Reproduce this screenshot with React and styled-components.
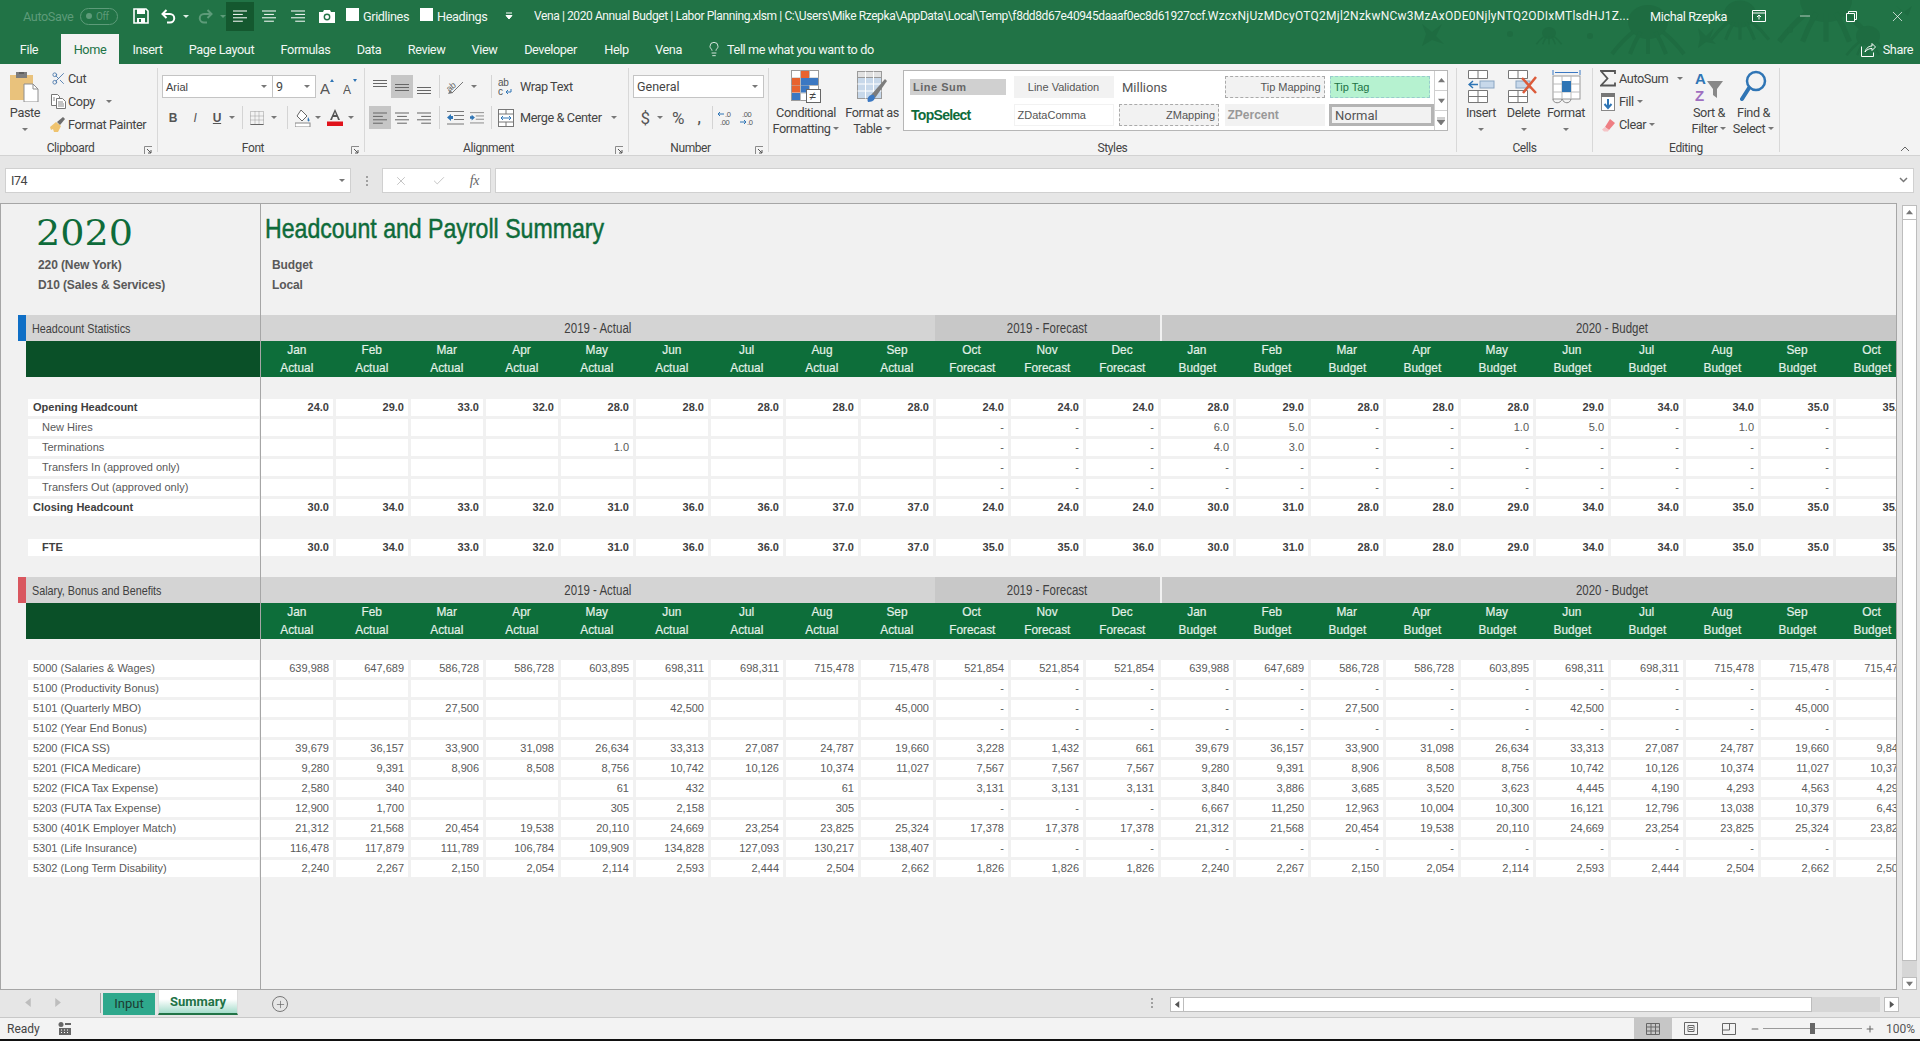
import React from "react";
import styled, { createGlobalStyle } from "styled-components";
import { Scissors, Lightbulb, Check, X, Minus, Plus } from "lucide-react";

const UI_FONT = `"Roboto", "Liberation Sans", sans-serif`;
const CELL_FONT = `"Liberation Sans", Arial, sans-serif`;

const GlobalStyle = createGlobalStyle`
  html, body { margin: 0; padding: 0; overflow: hidden; background: #f1f1f1; }
  * { box-sizing: border-box; }
`;

const Page = styled.div`
  width: 1920px;
  height: 1041px;
  display: flex;
  flex-direction: column;
  overflow: hidden;
  font-family: ${UI_FONT};
  font-size: 13px;
  letter-spacing: -0.4px;
  color: #444;
`;

/* the sheet headings use a condensed face, squeezed from Liberation Sans */
const Squeezed = styled.span`
  display: inline-block;
  white-space: nowrap;
  transform: scaleX(${(p) => p.$x || 0.82});
  transform-origin: ${(p) => p.$origin || "center"};
`;

/* ---------- title bar ---------- */

const Header = styled.header`
  position: relative;
  background: #217346;
  color: #fff;
  overflow: hidden;
`;

const Pattern = styled.svg`
  position: absolute;
  right: 0;
  top: 0;
`;

const TitleBar = styled.div`
  position: relative;
  display: flex;
  align-items: center;
  height: 34px;
  padding-bottom: 2px;
`;

const AutoSave = styled.span`
  margin-left: 23px;
  width: 57px;
  font-size: 12.7px;
  color: #5d9b79;
`;

const Toggle = styled.span`
  display: flex;
  align-items: center;
  gap: 4px;
  width: 38px;
  height: 17px;
  padding-left: 5px;
  border: 1px solid #5d9b79;
  border-radius: 9px;
  font-size: 10px;
  color: #5d9b79;
  &::before {
    content: "";
    width: 6px;
    height: 6px;
    border-radius: 50%;
    background: #5d9b79;
  }
`;

const QatButton = styled.span`
  display: flex;
  align-items: center;
  justify-content: center;
  flex: none;
  width: ${(p) => p.$w}px;
  height: 29px;
  margin-left: ${(p) => p.$ml || 0}px;
  background: ${(p) => (p.$active ? "#14582f" : "transparent")};
`;

const CheckItem = styled.span`
  display: flex;
  align-items: center;
  flex: none;
  width: ${(p) => p.$w}px;
  margin-left: ${(p) => p.$ml}px;
  font-size: 12.7px;
  color: #f0f6f2;
  &::before {
    content: "";
    flex: none;
    width: 13px;
    height: 13px;
    margin: -3px 4px 0 0;
    background: #fff;
  }
`;

const WindowTitle = styled.span`
  flex: none;
  margin-left: 6px;
  width: 1098px;
  white-space: nowrap;
  overflow: hidden;
  font-size: 12px;
  color: #f4f8f5;
`;

const TitleTail = styled.span`
  letter-spacing: 0.25px;
`;

const RightBlock = styled.div`
  display: flex;
  align-items: center;
  flex: none;
  margin-left: auto;
`;

const UserName = styled.span`
  margin-right: 9px;
  font-size: 12.7px;
  white-space: nowrap;
  color: #f4f8f5;
`;

const WinButton = styled.span`
  display: flex;
  align-items: center;
  justify-content: center;
  width: 46px;
  height: 30px;
`;

/* ---------- ribbon tabs ---------- */

const TabRow = styled.nav`
  position: relative;
  display: flex;
  height: 30px;
`;

const RibbonTab = styled.span`
  display: flex;
  align-items: center;
  justify-content: center;
  width: ${(p) => p.$w}px;
  margin-right: ${(p) => p.$mr || 0}px;
  font-size: 12.7px;
  background: ${(p) => (p.$active ? "#f3f3f3" : "transparent")};
  color: ${(p) => (p.$active ? "#217346" : "#f2f7f4")};
`;

const TellMe = styled.span`
  display: flex;
  align-items: center;
  gap: 5px;
  margin-left: 11px;
  font-size: 12.7px;
  color: #f2f7f4;
`;

const Share = styled.span`
  display: flex;
  align-items: center;
  gap: 7px;
  margin: 0 7px 0 auto;
  font-size: 12.7px;
  color: #f2f7f4;
`;

/* ---------- ribbon ---------- */

const Ribbon = styled.section`
  display: flex;
  flex: none;
  height: 92px;
  padding-top: 4px;
  background: #f3f3f3;
  border-bottom: 1px solid #d2d2d2;
`;

const Group = styled.div`
  display: flex;
  flex-direction: column;
  flex: none;
  width: ${(p) => p.$w}px;
  height: 84px;
  border-right: 1px solid #d8d8d8;
`;

const GroupBody = styled.div`
  display: flex;
  height: 72px;
  padding-left: ${(p) => p.$pl || 0}px;
`;

const GroupFoot = styled.div`
  display: grid;
  grid-template-columns: 1fr auto 1fr;
  align-items: center;
  height: 12px;
  padding-right: ${(p) => (p.$launcher ? 16 : 0)}px;
  font-size: 12px;
  line-height: 16px;
  color: #444;
  & > span { grid-column: 2; }
  & > svg { grid-column: 3; justify-self: end; margin: 4px -12px 0 0; }
`;

const Collapse = styled.span`
  display: block;
  margin: 78px 10px 0 auto;
  line-height: 0;
`;

const Launcher = () => (
  <svg width="9" height="9" viewBox="0 0 9 9">
    <path d="M.5 8V.5H8" fill="none" stroke="#8a8a8a" />
    <path d="M3 3l4 4M7 4v3H4" fill="none" stroke="#555" />
  </svg>
);

const BigButton = styled.div`
  display: flex;
  flex-direction: column;
  align-items: center;
  width: ${(p) => p.$w}px;
  flex: none;
  font-size: 12.7px;
  line-height: 16px;
  color: #444;
  white-space: nowrap;
`;

const BigIcon = styled.div`
  display: flex;
  align-items: center;
  justify-content: center;
  height: 37px;
`;

const Caret = styled.span`
  display: inline-block;
  flex: none;
  width: 0;
  height: 0;
  margin: ${(p) => p.$m || "0"};
  border-left: 3px solid transparent;
  border-right: 3px solid transparent;
  border-top: 3px solid ${(p) => p.$c || "#777"};
  vertical-align: middle;
`;

const CaretLine = styled.span`
  display: flex;
  align-items: center;
  justify-content: center;
  height: 16px;
`;

const SmallStack = styled.div`
  display: flex;
  flex-direction: column;
  width: ${(p) => p.$w}px;
  flex: none;
  margin-top: -1px;
`;

const SmallButton = styled.div`
  display: flex;
  align-items: center;
  height: 23px;
  font-size: 12.7px;
  white-space: nowrap;
  color: #444;
`;

const SmallIcon = styled.span`
  display: flex;
  justify-content: center;
  align-items: center;
  flex: none;
  width: ${(p) => p.$w}px;
  margin-right: ${(p) => p.$mr || 2}px;
`;

const TwoRows = styled.div`
  display: flex;
  flex-direction: column;
  gap: 8px;
  padding-top: 7px;
  width: 100%;
`;

const ToolRow = styled.div`
  display: flex;
  align-items: center;
  height: 23px;
  padding-left: ${(p) => p.$pl || 0}px;
`;

const Tool = styled.span`
  display: flex;
  align-items: center;
  justify-content: center;
  flex: none;
  width: ${(p) => p.$w}px;
  height: 23px;
  background: ${(p) => (p.$active ? "#c6c6c6" : "transparent")};
  font-family: ${(p) => (p.$letter ? CELL_FONT : "inherit")};
  font-size: ${(p) => (p.$size ? `${p.$size}px` : "inherit")};
  font-weight: ${(p) => (p.$bold ? 700 : 400)};
  font-style: ${(p) => (p.$italic ? "italic" : "normal")};
  text-decoration: ${(p) => (p.$under ? "underline" : "none")};
  color: #555;
`;

const ToolLabel = styled.span`
  flex: none;
  margin-left: ${(p) => p.$ml || 0}px;
  font-size: 12.7px;
  color: #444;
  white-space: nowrap;
`;

const ToolSep = styled.span`
  flex: none;
  width: 1px;
  height: 23px;
  margin: ${(p) => p.$m || "0"};
  background: #d4d4d4;
`;

const Combo = styled.div`
  display: flex;
  align-items: center;
  justify-content: space-between;
  flex: none;
  width: ${(p) => p.$w}px;
  height: 23px;
  padding: 0 5px 0 3px;
  background: #fff;
  border: 1px solid #c4c4c4;
  border-right-width: ${(p) => (p.$joined ? 0 : 1)}px;
  font-family: ${(p) => (p.$cell ? CELL_FONT : UI_FONT)};
  font-size: ${(p) => (p.$cell ? 11 : 12.5)}px;
  letter-spacing: 0;
  color: #444;
`;

/* styles gallery */

const Gallery = styled.div`
  display: flex;
  flex: none;
  width: 545px;
  height: 61px;
  margin-top: 2px;
  background: #fff;
  border: 1px solid #b6b6b6;
`;

const GalleryGrid = styled.div`
  flex: none;
  display: grid;
  grid-template-columns: repeat(5, 100px);
  grid-auto-rows: 22px;
  column-gap: 5.5px;
  row-gap: 6px;
  width: 530px;
  padding: 5px 0 0 4px;
`;

const GalleryScroll = styled.div`
  display: flex;
  flex-direction: column;
  flex: 1;
  border-left: 1px solid #d0d0d0;
`;

const GalleryArrow = styled.span`
  display: flex;
  align-items: center;
  justify-content: center;
  flex: 1;
  border-bottom: 1px solid #d0d0d0;
  &:last-child { border-bottom: none; }
`;

const StyleCell = styled.span`
  display: flex;
  align-items: center;
  justify-content: ${(p) => (p.$right ? "flex-end" : p.$center ? "center" : "flex-start")};
  padding: 0 3px;
  margin: ${(p) => p.$m || "0"};
  font-family: ${(p) => p.$font || CELL_FONT};
  font-size: ${(p) => p.$size || 11}px;
  font-weight: ${(p) => (p.$bold ? 700 : 400)};
  letter-spacing: ${(p) => p.$ls || 0}px;
  background: ${(p) => p.$bg || "transparent"};
  color: ${(p) => p.$c || "#555"};
  border: ${(p) => p.$border || "none"};
`;

/* ---------- formula bar ---------- */

const FormulaBar = styled.div`
  display: flex;
  flex: none;
  height: 47px;
  padding: 12px 6px 10px 5px;
  background: #e6e6e6;
`;

const NameBox = styled.div`
  display: flex;
  align-items: center;
  justify-content: space-between;
  flex: none;
  width: 346px;
  padding: 0 5px;
  background: #fff;
  border: 1px solid #d0d0d0;
  font-size: 12.5px;
`;

const BarDots = styled.span`
  display: flex;
  flex-direction: column;
  align-items: center;
  justify-content: center;
  gap: 2px;
  flex: none;
  width: 31px;
  & > i { width: 2px; height: 2px; background: #a0a0a0; }
`;

const FxButtons = styled.div`
  display: flex;
  align-items: center;
  justify-content: space-between;
  flex: none;
  width: 109px;
  padding: 0 11px;
  background: #fff;
  border: 1px solid #d0d0d0;
`;

const FxMark = styled.span`
  font-family: "Liberation Serif", serif;
  font-style: italic;
  font-size: 14px;
  color: #666;
`;

const FormulaInput = styled.div`
  display: flex;
  align-items: center;
  justify-content: flex-end;
  flex: 1;
  margin-left: 4px;
  padding-right: 5px;
  background: #fff;
  border: 1px solid #d0d0d0;
`;

/* ---------- sheet ---------- */

const SheetArea = styled.div`
  display: flex;
  flex: none;
  height: 787px;
  background: #e6e6e6;
`;

const Sheet = styled.main`
  display: flex;
  flex: none;
  width: 1897px;
  height: 787px;
  background: #f1f1f1;
  border: 1px solid #a6a6a6;
  overflow: hidden;
  font-family: ${CELL_FONT};
  font-size: 11px;
  letter-spacing: 0;
`;

const FrozenPane = styled.div`
  flex: none;
  width: 260px;
  border-right: 1px solid #a6a6a6;
`;

const ScrollPane = styled.div`
  flex: 1;
  overflow: hidden;
`;

const SheetHead = styled.div`
  height: 111px;
  padding-left: ${(p) => p.$pl}px;
`;

const Year = styled.div`
  height: 42px;
  padding-top: 11px;
  margin-left: -2px;
  font-family: "DejaVu Serif", serif;
  font-size: 35px;
  line-height: 36px;
  color: #0e6b3a;
`;

const Title = styled.h1`
  height: 42px;
  margin: 0;
  padding-top: 8px;
  font-family: ${CELL_FONT};
  font-size: 28px;
  line-height: 34px;
  font-weight: 400;
  -webkit-text-stroke: 0.5px #0e6b3a;
  color: #0e6b3a;
`;

const HeadLine = styled.div`
  height: 20px;
  padding-top: 2px;
  margin-top: ${(p) => p.$mt || 0}px;
  padding-left: ${(p) => p.$pl || 0}px;
  font-size: 12px;
  line-height: 20px;
  font-weight: 700;
  letter-spacing: -0.1px;
  color: #595959;
`;

const FrozenBand = styled.div`
  display: flex;
  align-items: center;
  height: 26px;
  margin-left: 17px;
  background: #d4d4d4;
  font-size: 13.5px;
  color: #404040;
  &::before {
    content: "";
    width: 8px;
    height: 26px;
    margin-right: 6px;
    background: ${(p) => p.$marker};
  }
`;

const FrozenGreen = styled.div`
  height: 36px;
  margin-left: 25px;
  background: #0a5028;
`;

const PeriodBand = styled.div`
  display: grid;
  grid-template-columns: 674px 225px 2px 899px;
  height: 26px;
  width: 1800px;
  background: #f1f1f1;
`;

const Period = styled.span`
  display: flex;
  align-items: center;
  justify-content: center;
  font-size: 14px;
  color: #404040;
  background: ${(p) => p.$bg};
`;

const MonthRow = styled.div`
  display: grid;
  grid-template-columns: repeat(22, 72px);
  column-gap: 3px;
  width: 1650px;
  height: 36px;
  background: #0d6e3a;
`;

const MonthCell = styled.div`
  text-align: center;
  font-size: 13.5px;
  line-height: 18px;
  -webkit-text-stroke: 0.2px #e4f1e8;
  color: #e4f1e8;
`;

const Gap = styled.div`
  height: ${(p) => p.$h}px;
`;

const LabelRow = styled.div`
  height: 17px;
  margin: 0 0 3px 27px;
  width: 231px;
  padding-left: ${(p) => (p.$indent ? 14 : 5)}px;
  background: #fff;
  line-height: 17px;
  font-weight: ${(p) => (p.$bold ? 700 : 400)};
  color: ${(p) => (p.$bold ? "#404040" : "#595959")};
  white-space: nowrap;
`;

const DataRow = styled.div`
  display: grid;
  grid-template-columns: repeat(22, 72px);
  column-gap: 3px;
  width: 1650px;
  height: 17px;
  margin-bottom: 3px;
`;

const DataCell = styled.div`
  padding-right: 4px;
  background: #fff;
  text-align: right;
  line-height: 17px;
  font-weight: ${(p) => (p.$bold ? 700 : 400)};
  color: ${(p) => (p.$bold ? "#404040" : "#595959")};
`;

const VScroll = styled.div`
  display: flex;
  flex-direction: column;
  flex: none;
  width: 15px;
  height: 785px;
  margin: 2px 0 0 5px;
`;

const ScrollBtn = styled.span`
  display: flex;
  align-items: center;
  justify-content: center;
  flex: none;
  width: ${(p) => p.$w || 15}px;
  height: ${(p) => p.$h || 15}px;
  background: #fff;
  border: 1px solid #bdbdbd;
`;

const VThumb = styled.div`
  flex: none;
  height: 741px;
  background: #fff;
  border: 1px solid #bdbdbd;
  border-top: none;
`;

const VTrack = styled.div`
  flex: 1;
  background: #d6d6d6;
`;

/* ---------- sheet tabs ---------- */

const SheetTabs = styled.div`
  display: flex;
  align-items: flex-start;
  flex: none;
  height: 28px;
  background: #e6e6e6;
  border-bottom: 1px solid #c8c8c8;
`;

const TabNav = styled.span`
  display: flex;
  align-items: center;
  gap: 20px;
  flex: none;
  width: 88px;
  height: 25px;
  padding-left: 24px;
`;

const NavSep = styled.span`
  flex: none;
  width: 1px;
  height: 20px;
  margin: 3px 2px 0 12px;
  background: #a6a6a6;
`;

const InputTab = styled.span`
  display: flex;
  align-items: center;
  justify-content: center;
  flex: none;
  width: 52px;
  height: 22px;
  margin-top: 3px;
  padding-bottom: 2px;
  background: #2ea88c;
  font-size: 13px;
  letter-spacing: 0;
  color: #1d3b31;
`;

const SummaryTab = styled.span`
  display: flex;
  align-items: center;
  justify-content: center;
  flex: none;
  width: 80px;
  height: 25px;
  margin: 0 0 0 3px;
  background: linear-gradient(#ffffff 40%, #a5dccb);
  border: 1px solid #dcdcdc;
  border-top: none;
  border-bottom: 2px solid #217346;
  font-size: 13px;
  font-weight: 700;
  letter-spacing: 0;
  color: #217346;
`;

const AddSheet = styled.span`
  display: flex;
  align-items: center;
  justify-content: center;
  flex: none;
  width: 16px;
  height: 16px;
  margin: 6px 0 0 34px;
  border: 1px solid #777;
  border-radius: 50%;
`;

const TabDots = styled(BarDots)`
  width: 8px;
  height: 25px;
  margin-left: 860px;
`;

const HScroll = styled.div`
  display: flex;
  flex: none;
  margin: 7px 0 0 14px;
  height: 15px;
`;

const HThumb = styled.div`
  width: 628px;
  background: #fff;
  border: 1px solid #bdbdbd;
  border-left: none;
`;

const HTrack = styled.div`
  width: 68px;
  margin-right: 4px;
  background: #d6d6d6;
`;

/* ---------- status bar ---------- */

const StatusBar = styled.footer`
  display: flex;
  align-items: center;
  flex: none;
  height: 23px;
  padding: 0 8px 0 0;
  background: #f3f3f3;
  border-bottom: 2px solid #111;
  font-size: 12px;
`;

const Ready = styled.span`
  margin-left: 7px;
  width: 51px;
  letter-spacing: 0;
  color: #444;
`;

const StatusRight = styled.div`
  display: flex;
  align-items: center;
  margin-left: auto;
`;

const ViewButton = styled.span`
  display: flex;
  align-items: center;
  justify-content: center;
  flex: none;
  width: ${(p) => p.$w || 38}px;
  height: 21px;
  background: ${(p) => (p.$active ? "#c6c6c6" : "transparent")};
`;

const ZoomSlider = styled.span`
  display: flex;
  align-items: center;
  justify-content: center;
  flex: none;
  width: 99px;
  height: 21px;
  margin: 0 0 0 1px;
  background: linear-gradient(#9a9a9a, #9a9a9a) center / 100% 1px no-repeat;
  &::after {
    content: "";
    width: 5px;
    height: 11px;
    background: #666;
  }
`;

const ZoomLabel = styled.span`
  width: 26px;
  margin-left: 8px;
  font-size: 12px;
  letter-spacing: 0;
  color: #555;
`;

/* ---------- icons ---------- */

const Lines = ({ kind, color = "#555", w = 14 }) => {
  const rows = [w, w * 0.7, w, w * 0.7];
  return (
    <svg width={w} height="12" viewBox={`0 0 ${w} 12`}>
      {rows.map((len, i) => {
        const x = kind === "left" ? 0 : kind === "right" ? w - len : (w - len) / 2;
        return <rect key={i} x={x} y={i * 3.4 + 0.5} width={len} height="1" fill={color} />;
      })}
    </svg>
  );
};

const VAlign = ({ at }) => (
  <svg width="14" height="14" viewBox="0 0 14 14">
    {[0, 1, 2].map((i) => (
      <rect key={i} x="0" y={at + i * 3} width="14" height="1" fill="#666" />
    ))}
  </svg>
);

const SaveIcon = () => (
  <svg width="16" height="16" viewBox="0 0 16 16">
    <path d="M1 1h12l2 2v12H1z" fill="none" stroke="#fff" strokeWidth="1.6" />
    <rect x="4" y="1" width="8" height="5" fill="#fff" />
    <rect x="4" y="10" width="8" height="5" fill="#fff" />
    <rect x="6" y="11" width="2" height="3" fill="#217346" />
  </svg>
);

const UndoIcon = ({ color = "#fff", flip }) => (
  <svg width="15" height="15" viewBox="0 0 15 15" style={flip ? { transform: "scaleX(-1)" } : undefined}>
    <path d="M5.5 1L1.5 5l4 4" fill="none" stroke={color} strokeWidth="2" />
    <path d="M2 5h7a4 4 0 0 1 0 8.5H6" fill="none" stroke={color} strokeWidth="2" />
  </svg>
);

const CameraIcon = () => (
  <svg width="16" height="14" viewBox="0 0 16 14">
    <path d="M0 3h4l1-2h6l1 2h4v11H0z" fill="#fff" />
    <circle cx="8" cy="8" r="3.4" fill="#217346" />
    <circle cx="8" cy="8" r="2" fill="#fff" />
  </svg>
);

const PasteIcon = () => (
  <svg width="30" height="30" viewBox="0 0 30 30">
    <rect x="0" y="3" width="23" height="25" fill="#e9c27c" />
    <rect x="6" y="0" width="11" height="6" fill="#7d7d7d" />
    <rect x="9" y="0" width="5" height="2" fill="#5f5f5f" />
    <path d="M14 12h9l5 5v13H14z" fill="#fff" stroke="#8f8f8f" />
    <path d="M23 12v5h5" fill="none" stroke="#8f8f8f" />
  </svg>
);

const CopyIcon = () => (
  <svg width="15" height="15" viewBox="0 0 15 15">
    <path d="M.5.5h6l2 2v9h-8z" fill="#fff" stroke="#777" />
    <path d="M5.5 4.5h6l3 3v7h-9z" fill="#fff" stroke="#777" />
    <path d="M7 8h5M7 10h6M7 12h6M2 4h2M2 6h2" stroke="#888" />
  </svg>
);

const PainterIcon = () => (
  <svg width="16" height="15" viewBox="0 0 16 15">
    <path d="M0 10l6-5 5 4-3 6H4l-1-3-2 1z" fill="#efc36e" />
    <path d="M7 5l3 3 5-6-2-2z" fill="#6d6d6d" />
  </svg>
);

const GrowA = ({ size, up }) => (
  <svg width="15" height="18" viewBox="0 0 15 18">
    <text x="0" y="16" fontFamily={CELL_FONT} fontSize={size} fill="#555">A</text>
    <path d={up ? "M10 4l2-3 2 3z" : "M10 1l2 3 2-3z"} fill="#2f75b5" />
  </svg>
);

const BorderIcon = () => (
  <svg width="14" height="14" viewBox="0 0 14 14">
    <path d="M.5.5h13v13H.5zM5 .5v13M9 .5v13M.5 5h13M.5 9h13" fill="none" stroke="#9a9a9a" strokeDasharray="1 1" />
    <path d="M.5 13.5h13" stroke="#666" />
  </svg>
);

const FillIcon = () => (
  <svg width="16" height="18" viewBox="0 0 16 18">
    <path d="M6 1l6 6-5 5-5-5z" fill="#fff" stroke="#666" />
    <path d="M13 8c1 2 2 3 1.400 4-.8 1-2 .3-1.800-1z" fill="#2f75b5" />
    <rect x="0" y="14" width="15" height="4" fill="#fff" stroke="#888" />
  </svg>
);

const ColorA = () => (
  <svg width="16" height="17" viewBox="0 0 16 17">
    <path d="M8 0L3 11h2l1-3h4l1 3h2zM7 6l1-3 1 3z" fill="#555" fillRule="evenodd" />
    <rect x="0" y="12.500" width="16" height="4.500" fill="#e0121b" />
  </svg>
);

const OrientIcon = () => (
  <svg width="18" height="17" viewBox="0 0 18 17">
    <text x="0" y="11" fontFamily={CELL_FONT} fontSize="9" fill="#666" transform="rotate(-40 6 8)">ab</text>
    <path d="M6 15L17 4" stroke="#777" />
    <path d="M2 16l5-1-3-3z" fill="#777" />
  </svg>
);

const IndentIcon = ({ out }) => (
  <svg width="17" height="14" viewBox="0 0 17 14">
    <path d="M0 .5h17M7 4.500h10M7 8.500h10M0 13h17" stroke="#777" />
    <path d={out ? "M0 6.500L4 3v2h2v3H4v2z" : "M6 6.500L2 3v2H0v3h2v2z"} fill="#2f75b5" />
  </svg>
);

const WrapIcon = () => (
  <svg width="16" height="18" viewBox="0 0 16 18">
    <text x="0" y="8" fontFamily={CELL_FONT} fontSize="10" fill="#555">ab</text>
    <text x="0" y="17" fontFamily={CELL_FONT} fontSize="10" fill="#555">c</text>
    <path d="M13 11v3H8M10 12l-2 2 2 2" fill="none" stroke="#2f75b5" />
  </svg>
);

const MergeIcon = () => (
  <svg width="16" height="18" viewBox="0 0 16 18">
    <rect x=".5" y=".5" width="15" height="17" fill="#fff" stroke="#777" />
    <path d="M.5 5h15M.5 13h15M8 .5V5M8 13v5" stroke="#777" />
    <path d="M3 9h10M5 7L3 9l2 2M11 7l2 2-2 2" fill="none" stroke="#2f75b5" />
  </svg>
);

const CondFormatIcon = () => (
  <svg width="30" height="33" viewBox="0 0 30 33">
    <rect x=".5" y=".5" width="27" height="30" fill="#fff" stroke="#9a9a9a" />
    <path d="M9.500 .5v30M18.500 .5v30M.5 8h27M.5 15.500h27M.5 23h27" stroke="#b9b9b9" />
    <rect x="10" y="1" width="8" height="7" fill="#e8632e" />
    <rect x="1" y="8" width="8" height="7" fill="#e8632e" />
    <rect x="10" y="8" width="17" height="7" fill="#3b78c2" />
    <rect x="1" y="15.500" width="8" height="7" fill="#e8632e" />
    <rect x="10" y="15.500" width="8" height="7" fill="#3b78c2" />
    <rect x="1" y="23" width="8" height="7" fill="#3b78c2" />
    <rect x="15.500" y="19.500" width="14" height="13" fill="#fff" stroke="#666" />
    <text x="18.500" y="30" fontFamily={CELL_FONT} fontSize="12" fill="#444">≠</text>
  </svg>
);

const TableFormatIcon = () => (
  <svg width="30" height="32" viewBox="0 0 30 32">
    <rect x=".5" y=".5" width="24" height="27" fill="#c7d8ea" stroke="#9a9a9a" />
    <rect x=".5" y=".5" width="24" height="6" fill="#e2e2e2" stroke="#9a9a9a" />
    <path d="M8.500 .5v27M16.500 .5v27M.5 13h24M.5 20h24" stroke="#fff" />
    <path d="M14 24l14-16 2 2-12 17z" fill="#7c7c7c" />
    <path d="M11 31c-2-4 2-8 6-7l1 3c-1 3-4 4-7 4z" fill="#3b78c2" />
  </svg>
);

const CellsBase = () => (
  <>
    <path d="M.5 .5h19v8H.5zM10 .5v8" fill="#fff" stroke="#777" />
    <path d="M.5 20.500h19v12H.5zM10 20.500v12M.5 26.500h19" fill="#fff" stroke="#777" />
  </>
);

const InsertIcon = () => (
  <svg width="27" height="33" viewBox="0 0 27 33">
    <CellsBase />
    <rect x="12" y="11" width="14" height="7" fill="#c7d8ea" stroke="#8aa5c2" />
    <path d="M10 14.500H2M5 11l-4 3.500L5 18" fill="none" stroke="#2f75b5" strokeWidth="1.5" />
  </svg>
);

const DeleteIcon = () => (
  <svg width="31" height="33" viewBox="0 0 31 33">
    <CellsBase />
    <rect x="8" y="11" width="14" height="7" fill="#c7d8ea" stroke="#8aa5c2" />
    <path d="M14 8l14 15M28 7L15 23" stroke="#dc5b3a" strokeWidth="2.500" />
  </svg>
);

const FormatIcon = () => (
  <svg width="29" height="35" viewBox="0 0 29 35">
    <path d="M1 1v5M28 1v5M3 3.500h23" stroke="#3b78c2" />
    <rect x="1" y="7" width="27" height="23" fill="#fff" stroke="#999" />
    <path d="M10 7v23M19 7v23M1 15h27M1 23h27" stroke="#bbb" />
    <rect x="10" y="12" width="9" height="11" fill="#2f75b5" />
    <path d="M1 30c0 5 8 5 9 0M10 30c2 5 8 5 9 0" fill="none" stroke="#888" />
  </svg>
);

const SigmaIcon = () => (
  <svg width="16" height="17" viewBox="0 0 16 17">
    <path d="M15 4V1H1l6.500 7.500L1 15.500h14v-3" fill="none" stroke="#555" strokeWidth="1.800" />
  </svg>
);

const FillDownIcon = () => (
  <svg width="14" height="18" viewBox="0 0 14 18">
    <rect x=".5" y=".5" width="13" height="17" fill="#fff" stroke="#888" />
    <rect x="0" y="0" width="14" height="4" fill="#777" />
    <path d="M7 6v9M3.500 11L7 15l3.500-4" fill="none" stroke="#2f75b5" strokeWidth="2" />
  </svg>
);

const EraserIcon = () => (
  <svg width="14" height="14" viewBox="0 0 14 14">
    <path d="M9 1l5 4-6 7-4-3z" fill="#ee7e83" />
    <path d="M4 9l4 3-1 1.500H3L1 11.500z" fill="#f5c4c6" />
  </svg>
);

const SortIcon = () => (
  <svg width="28" height="33" viewBox="0 0 28 33">
    <text x="0" y="14" fontFamily={CELL_FONT} fontWeight="700" fontSize="15" fill="#2f75b5">A</text>
    <text x="0" y="31" fontFamily={CELL_FONT} fontWeight="700" fontSize="15" fill="#9f6fc0">Z</text>
    <path d="M12 11h16l-6 8v9l-4-3v-6z" fill="#888" />
  </svg>
);

const FindIcon = () => (
  <svg width="27" height="33" viewBox="0 0 27 33">
    <circle cx="16" cy="11" r="9" fill="none" stroke="#2f75b5" strokeWidth="2.500" />
    <path d="M9 18L2 29" stroke="#2f75b5" strokeWidth="4" strokeLinecap="round" />
  </svg>
);

const DecreaseIcon = ({ inc }) => (
  <svg width="20" height="16" viewBox="0 0 20 16">
    <text x={inc ? 3 : 8} y="7" fontFamily={CELL_FONT} fontSize="7.500" fill="#555">{inc ? ".00" : ".0"}</text>
    <text x={inc ? 8 : 3} y="15" fontFamily={CELL_FONT} fontSize="7.500" fill="#555">{inc ? ".0" : ".00"}</text>
    <path d={inc ? "M1 12h6M5 10l2 2-2 2" : "M1 4h6M3 2L1 4l2 2"} fill="none" stroke="#2f75b5" />
  </svg>
);

const Triangle = ({ dir = "down", color = "#777", size = 7 }) => {
  const d = {
    up: "M0 6h8L4 1z",
    down: "M0 2h8L4 7z",
    left: "M6 0v8L1 4z",
    right: "M2 0v8l5-4z",
  }[dir];
  return (
    <svg width={size} height={size} viewBox="0 0 8 8">
      <path d={d} fill={color} />
    </svg>
  );
};

const PATTERN = "#1e6c41";

const OctopusPattern = () => {
  const octo = (x, y, r) => (
    <g key={`${x}-${y}`}>
      <ellipse cx={x} cy={y} rx={r} ry={r * 0.85} />
      {[-3, -1.5, 0, 1.5, 3].map((k) => (
        <path key={k} d={`M${x + k * r * 0.25} ${y + r * 0.5}q${k * r * 0.2} ${r * 0.5} ${k * r * 0.35} ${r * 1.1}`} fill="none" stroke={PATTERN} strokeWidth={Math.max(r / 5, 1.5)} />
      ))}
    </g>
  );
  return (
    <Pattern width="560" height="64" viewBox="0 0 560 64" fill={PATTERN}>
      {octo(189, 33, 7)}
      {octo(288, 22, 20)}
      {octo(380, 14, 16)}
      {octo(466, 0, 26)}
      {octo(508, 36, 12)}
      <circle cx="150" cy="34" r="3" />
      <circle cx="230" cy="36" r="3" />
      <circle cx="430" cy="30" r="3" />
      <path d="M62 24l10 8 10-8-6 12 8 8-12-4-10 6 4-12zM338 28l8 8 8-8-4 10 6 6-10-2-8 6 2-10zM536 6l8 6 8-6-4 10z" />
    </Pattern>
  );
};

/* ---------- data ---------- */

const split = (s) => s.split(" ").map((v) => (v === "_" ? "" : v));

const MONTHS = [
  ...["Jan", "Feb", "Mar", "Apr", "May", "Jun", "Jul", "Aug", "Sep"].map((m) => [m, "Actual"]),
  ...["Oct", "Nov", "Dec"].map((m) => [m, "Forecast"]),
  ...["Jan", "Feb", "Mar", "Apr", "May", "Jun", "Jul", "Aug", "Sep", "Oct"].map((m) => [m, "Budget"]),
];

const DASHES = "- - - - - - - - - - - - _";
const BLANK9 = "_ _ _ _ _ _ _ _ _";

const HEADCOUNT = [
  { label: "Opening Headcount", bold: true, vals: "24.0 29.0 33.0 32.0 28.0 28.0 28.0 28.0 28.0 24.0 24.0 24.0 28.0 29.0 28.0 28.0 28.0 29.0 34.0 34.0 35.0 35.0" },
  { label: "New Hires", indent: true, vals: `${BLANK9} - - - 6.0 5.0 - - 1.0 5.0 - 1.0 - _` },
  { label: "Terminations", indent: true, vals: `_ _ _ _ 1.0 _ _ _ _ - - - 4.0 3.0 - - - - - - - _` },
  { label: "Transfers In (approved only)", indent: true, vals: `${BLANK9} ${DASHES}` },
  { label: "Transfers Out (approved only)", indent: true, vals: `${BLANK9} ${DASHES}` },
  { label: "Closing Headcount", bold: true, vals: "30.0 34.0 33.0 32.0 31.0 36.0 36.0 37.0 37.0 24.0 24.0 24.0 30.0 31.0 28.0 28.0 29.0 34.0 34.0 35.0 35.0 35.0" },
  { gap: true },
  { label: "FTE", bold: true, indent: true, vals: "30.0 34.0 33.0 32.0 31.0 36.0 36.0 37.0 37.0 35.0 35.0 36.0 30.0 31.0 28.0 28.0 29.0 34.0 34.0 35.0 35.0 35.0" },
];

const SALARY = [
  { label: "5000 (Salaries & Wages)", vals: "639,988 647,689 586,728 586,728 603,895 698,311 698,311 715,478 715,478 521,854 521,854 521,854 639,988 647,689 586,728 586,728 603,895 698,311 698,311 715,478 715,478 715,478" },
  { label: "5100 (Productivity Bonus)", vals: `${BLANK9} ${DASHES}` },
  { label: "5101 (Quarterly MBO)", vals: "_ _ 27,500 _ _ 42,500 _ _ 45,000 - - - - - 27,500 - - 42,500 - - 45,000 _" },
  { label: "5102 (Year End Bonus)", vals: `${BLANK9} ${DASHES}` },
  { label: "5200 (FICA SS)", vals: "39,679 36,157 33,900 31,098 26,634 33,313 27,087 24,787 19,660 3,228 1,432 661 39,679 36,157 33,900 31,098 26,634 33,313 27,087 24,787 19,660 9,840" },
  { label: "5201 (FICA Medicare)", vals: "9,280 9,391 8,906 8,508 8,756 10,742 10,126 10,374 11,027 7,567 7,567 7,567 9,280 9,391 8,906 8,508 8,756 10,742 10,126 10,374 11,027 10,374" },
  { label: "5202 (FICA Tax Expense)", vals: "2,580 340 _ _ 61 432 _ 61 _ 3,131 3,131 3,131 3,840 3,886 3,685 3,520 3,623 4,445 4,190 4,293 4,563 4,293" },
  { label: "5203 (FUTA Tax Expense)", vals: "12,900 1,700 _ _ 305 2,158 _ 305 _ - - - 6,667 11,250 12,963 10,004 10,300 16,121 12,796 13,038 10,379 6,435" },
  { label: "5300 (401K Employer Match)", vals: "21,312 21,568 20,454 19,538 20,110 24,669 23,254 23,825 25,324 17,378 17,378 17,378 21,312 21,568 20,454 19,538 20,110 24,669 23,254 23,825 25,324 23,825" },
  { label: "5301 (Life Insurance)", vals: `116,478 117,879 111,789 106,784 109,909 134,828 127,093 130,217 138,407 ${DASHES}` },
  { label: "5302 (Long Term Disability)", vals: "2,240 2,267 2,150 2,054 2,114 2,593 2,444 2,504 2,662 1,826 1,826 1,826 2,240 2,267 2,150 2,054 2,114 2,593 2,444 2,504 2,662 2,504" },
];

const RIBBON_TABS = [
  ["File", 58, 3],
  ["Home", 58, 0, true],
  ["Insert", 57],
  ["Page Layout", 91],
  ["Formulas", 77],
  ["Data", 50],
  ["Review", 65],
  ["View", 51],
  ["Developer", 81],
  ["Help", 51],
  ["Vena", 53],
];

/* ---------- parts ---------- */

const FrozenSection = ({ title, marker, rows, topGap }) => (
  <>
    <FrozenBand $marker={marker}>
      <Squeezed $x={0.8} $origin="left">{title}</Squeezed>
    </FrozenBand>
    <FrozenGreen />
    <Gap $h={topGap} />
    {rows.map((r, i) =>
      r.gap ? (
        <Gap key={i} $h={20} />
      ) : (
        <LabelRow key={r.label} $bold={r.bold} $indent={r.indent}>
          {r.label}
        </LabelRow>
      )
    )}
  </>
);

const DataSection = ({ rows, topGap }) => (
  <>
    <PeriodBand>
      <Period $bg="#d4d4d4"><Squeezed>2019 - Actual</Squeezed></Period>
      <Period $bg="#c8c8c8"><Squeezed>2019 - Forecast</Squeezed></Period>
      <span />
      <Period $bg="#c8c8c8"><Squeezed>2020 - Budget</Squeezed></Period>
    </PeriodBand>
    <MonthRow>
      {MONTHS.map(([m, k], i) => (
        <MonthCell key={i}>
          <Squeezed $x={0.88}>{m}</Squeezed>
          <br />
          <Squeezed $x={0.88}>{k}</Squeezed>
        </MonthCell>
      ))}
    </MonthRow>
    <Gap $h={topGap} />
    {rows.map((r, i) =>
      r.gap ? (
        <Gap key={i} $h={20} />
      ) : (
        <DataRow key={r.label}>
          {split(r.vals).map((v, j) => (
            <DataCell key={j} $bold={r.bold}>
              {v}
            </DataCell>
          ))}
        </DataRow>
      )
    )}
  </>
);

const BigAction = ({ w, icon, lines, caretOnly }) => (
  <BigButton $w={w}>
    <BigIcon>{icon}</BigIcon>
    {lines.map((l, i) => (
      <span key={l}>
        {l}
        {!caretOnly && i === lines.length - 1 && <Caret $m="0 0 2px 3px" />}
      </span>
    ))}
    {caretOnly && (
      <CaretLine>
        <Caret />
      </CaretLine>
    )}
  </BigButton>
);

const Foot = ({ label, launcher }) => (
  <GroupFoot $launcher={launcher}>
    <span>{label}</span>
    {launcher && <Launcher />}
  </GroupFoot>
);

export default function App() {
  return (
    <Page>
      <GlobalStyle />
      <Header>
        <OctopusPattern />
        <TitleBar>
          <AutoSave>AutoSave</AutoSave>
          <Toggle>Off</Toggle>
          <QatButton $w={29} $ml={8}><SaveIcon /></QatButton>
          <QatButton $w={27}><UndoIcon /></QatButton>
          <QatButton $w={8}><Caret $c="#dfeee5" /></QatButton>
          <QatButton $w={30}><UndoIcon color="#5d9b79" flip /></QatButton>
          <QatButton $w={6}><Caret $c="#5d9b79" /></QatButton>
          <QatButton $w={28} $active><Lines kind="left" color="#fff" /></QatButton>
          <QatButton $w={29}><Lines kind="center" color="#fff" /></QatButton>
          <QatButton $w={29}><Lines kind="right" color="#fff" /></QatButton>
          <QatButton $w={30}><CameraIcon /></QatButton>
          <CheckItem $ml={4} $w={63}>Gridlines</CheckItem>
          <CheckItem $ml={11} $w={70}>Headings</CheckItem>
          <QatButton $w={38}>
            <svg width="8" height="8" viewBox="0 0 8 8">
              <path d="M1 1h6M1 3.500h6L4 7z" stroke="#fff" fill="#fff" strokeWidth="1" />
            </svg>
          </QatButton>
          <WindowTitle>
            {"Vena | 2020 Annual Budget | Labor Planning.xlsm | C:\\Users\\Mike Rzepka\\AppData\\Local\\Temp\\f8dd8d67e40945daaaf0ec8d61927ccf."}
            <TitleTail>WzcxNjUzMDcyOTQ2Mjl2NzkwNCw3MzAxODE0NjlyNTQ2ODIxMTlsdHJ1Z...</TitleTail>
          </WindowTitle>
          <RightBlock>
            <UserName>Michal Rzepka</UserName>
            <WinButton>
              <svg width="14" height="12" viewBox="0 0 14 12">
                <path d="M.5.5h13v11H.5zM.5 3h13" fill="none" stroke="#fff" />
                <path d="M7 9.500V5M5 7l2-2 2 2" fill="none" stroke="#fff" />
              </svg>
            </WinButton>
            <WinButton><Minus size={16} strokeWidth={1} color="#fff" /></WinButton>
            <WinButton>
              <svg width="11" height="11" viewBox="0 0 11 11">
                <path d="M.5 2.500h8v8h-8zM2.500 2.500v-2h8v8h-2" fill="none" stroke="#fff" />
              </svg>
            </WinButton>
            <WinButton><X size={17} strokeWidth={1} color="#fff" /></WinButton>
          </RightBlock>
        </TitleBar>
        <TabRow>
          {RIBBON_TABS.map(([name, w, mr, active]) => (
            <RibbonTab key={name} $w={w} $mr={mr} $active={active}>
              {name}
            </RibbonTab>
          ))}
          <TellMe>
            <Lightbulb size={16} strokeWidth={1.2} color="#fff" />
            Tell me what you want to do
          </TellMe>
          <Share>
            <svg width="15" height="15" viewBox="0 0 15 15">
              <path d="M.5 4.500v10h12v-4M4 10c1-4 4-6 7-6V1.500L14.500 5 11 8.500V6.500c-3 0-5 1-7 3.500z" fill="none" stroke="#fff" />
            </svg>
            Share
          </Share>
        </TabRow>
      </Header>

      <Ribbon>
        <Group $w={158}>
          <GroupBody>
            <BigButton $w={50}>
              <BigIcon><PasteIcon /></BigIcon>
              <span>Paste</span>
              <CaretLine><Caret /></CaretLine>
            </BigButton>
            <SmallStack $w={107}>
              <SmallButton><SmallIcon $w={16}><Scissors size={15} strokeWidth={1.4} color="#4a78ac" /></SmallIcon>Cut</SmallButton>
              <SmallButton><SmallIcon $w={16}><CopyIcon /></SmallIcon>Copy<Caret $m="0 0 0 11px" /></SmallButton>
              <SmallButton><SmallIcon $w={16}><PainterIcon /></SmallIcon>Format Painter</SmallButton>
            </SmallStack>
          </GroupBody>
          <Foot label="Clipboard" launcher />
        </Group>

        <Group $w={207}>
          <GroupBody $pl={4}>
            <TwoRows>
              <ToolRow>
                <Combo $w={110} $joined $cell>Arial<Caret /></Combo>
                <Combo $w={44}>9<Caret /></Combo>
                <Tool $w={23}><GrowA size={15} up /></Tool>
                <Tool $w={23}><GrowA size={12} /></Tool>
              </ToolRow>
              <ToolRow $pl={3}>
                <Tool $w={16} $letter $bold $size={12}>B</Tool>
                <Tool $w={28} $letter $italic $size={12}>I</Tool>
                <Tool $w={16} $letter $bold $under $size={12}>U</Tool>
                <Tool $w={14}><Caret /></Tool>
                <ToolSep $m="0 7px 0 3px" />
                <Tool $w={14}><BorderIcon /></Tool>
                <Tool $w={20}><Caret /></Tool>
                <ToolSep $m="0 7px 0 3px" />
                <Tool $w={16}><FillIcon /></Tool>
                <Tool $w={14}><Caret /></Tool>
                <Tool $w={20}><ColorA /></Tool>
                <Tool $w={12}><Caret /></Tool>
              </ToolRow>
            </TwoRows>
          </GroupBody>
          <Foot label="Font" launcher />
        </Group>

        <Group $w={264}>
          <GroupBody $pl={4}>
            <TwoRows>
              <ToolRow>
                <Tool $w={22}><VAlign at={0} /></Tool>
                <Tool $w={22} $active><VAlign at={4} /></Tool>
                <Tool $w={22}><VAlign at={7} /></Tool>
                <ToolSep $m="0 0 0 4px" />
                <Tool $w={30}><OrientIcon /></Tool>
                <Tool $w={8}><Caret /></Tool>
                <ToolSep $m="0 0 0 13px" />
                <Tool $w={28}><WrapIcon /></Tool>
                <ToolLabel>Wrap Text</ToolLabel>
              </ToolRow>
              <ToolRow>
                <Tool $w={22} $active><Lines kind="left" color="#666" /></Tool>
                <Tool $w={22}><Lines kind="center" color="#666" /></Tool>
                <Tool $w={22}><Lines kind="right" color="#666" /></Tool>
                <ToolSep $m="0 0 0 4px" />
                <Tool $w={30}><IndentIcon out /></Tool>
                <Tool $w={14}><IndentIcon /></Tool>
                <ToolSep $m="0 0 0 7px" />
                <Tool $w={28}><MergeIcon /></Tool>
                <ToolLabel>Merge &amp; Center</ToolLabel>
                <Caret $m="0 0 0 9px" />
              </ToolRow>
            </TwoRows>
          </GroupBody>
          <Foot label="Alignment" launcher />
        </Group>

        <Group $w={140}>
          <GroupBody $pl={4}>
            <TwoRows>
              <ToolRow><Combo $w={131}>General<Caret /></Combo></ToolRow>
              <ToolRow $pl={3}>
                <Tool $w={18} $size={17}>$</Tool>
                <Tool $w={12}><Caret /></Tool>
                <Tool $w={24} $size={17}>%</Tool>
                <Tool $w={18} $bold $size={14}>,</Tool>
                <ToolSep $m="0 3px 0 4px" />
                <Tool $w={22}><DecreaseIcon /></Tool>
                <Tool $w={22}><DecreaseIcon inc /></Tool>
              </ToolRow>
            </TwoRows>
          </GroupBody>
          <Foot label="Number" launcher />
        </Group>

        <Group $w={688}>
          <GroupBody $pl={2}>
            <BigAction w={70} icon={<CondFormatIcon />} lines={["Conditional", "Formatting"]} />
            <BigAction w={62} icon={<TableFormatIcon />} lines={["Format as", "Table"]} />
            <Gallery>
              <GalleryGrid>
                <StyleCell $bg="#d0d0d0" $bold $c="#666" $ls={0.5} $m="3px 2px">Line Sum</StyleCell>
                <StyleCell $bg="#f2f2f2" $center>Line Validation</StyleCell>
                <StyleCell $font={UI_FONT} $size={13}>Millions</StyleCell>
                <StyleCell $bg="#f2f2f2" $right $border="1px dashed #aaa">Tip Mapping</StyleCell>
                <StyleCell $bg="#b6f2d0" $c="#217346" $border="1px dashed #9cc">Tip Tag</StyleCell>
                <StyleCell $bold $size={14} $ls={-0.7} $c="#0e6b3a">TopSelect</StyleCell>
                <StyleCell $bg="#fff" $border="1px solid #f2f2f2">ZDataComma</StyleCell>
                <StyleCell $bg="#f2f2f2" $right $border="1px dashed #aaa">ZMapping</StyleCell>
                <StyleCell $bg="#f2f2f2" $bold $c="#999" $size={12}>ZPercent</StyleCell>
                <StyleCell $bg="#f2f2f2" $font={UI_FONT} $size={13} $border="3px solid #b4b4b4" $m="0 -4px 0 -1px">Normal</StyleCell>
              </GalleryGrid>
              <GalleryScroll>
                <GalleryArrow><Triangle dir="up" /></GalleryArrow>
                <GalleryArrow><Triangle /></GalleryArrow>
                <GalleryArrow>
                  <svg width="8" height="8" viewBox="0 0 8 8"><path d="M0 1h8M0 3h8L4 8z" stroke="#777" fill="#777" strokeWidth=".7" /></svg>
                </GalleryArrow>
              </GalleryScroll>
            </Gallery>
          </GroupBody>
          <Foot label="Styles" />
        </Group>

        <Group $w={136}>
          <GroupBody $pl={3}>
            <BigAction w={42} icon={<InsertIcon />} lines={["Insert"]} caretOnly />
            <BigAction w={43} icon={<DeleteIcon />} lines={["Delete"]} caretOnly />
            <BigAction w={42} icon={<FormatIcon />} lines={["Format"]} caretOnly />
          </GroupBody>
          <Foot label="Cells" />
        </Group>

        <Group $w={187}>
          <GroupBody $pl={6}>
            <SmallStack $w={88}>
              <SmallButton><SmallIcon $w={18}><SigmaIcon /></SmallIcon>AutoSum<Caret $m="0 0 0 9px" /></SmallButton>
              <SmallButton><SmallIcon $w={18}><FillDownIcon /></SmallIcon>Fill<Caret $m="0 0 0 3px" /></SmallButton>
              <SmallButton><SmallIcon $w={18}><EraserIcon /></SmallIcon>Clear<Caret $m="0 0 0 3px" /></SmallButton>
            </SmallStack>
            <BigAction w={44} icon={<SortIcon />} lines={["Sort &", "Filter"]} />
            <BigAction w={45} icon={<FindIcon />} lines={["Find &", "Select"]} />
          </GroupBody>
          <Foot label="Editing" />
        </Group>
        <Collapse>
          <svg width="10" height="6" viewBox="0 0 10 6">
            <path d="M1 5l4-4 4 4" fill="none" stroke="#666" />
          </svg>
        </Collapse>
      </Ribbon>

      <FormulaBar>
        <NameBox>I74<Caret /></NameBox>
        <BarDots><i /><i /><i /></BarDots>
        <FxButtons>
          <X size={14} strokeWidth={1.5} color="#bdbdbd" />
          <Check size={14} strokeWidth={1.5} color="#bdbdbd" />
          <FxMark>fx</FxMark>
        </FxButtons>
        <FormulaInput>
          <svg width="9" height="7" viewBox="0 0 9 7"><path d="M1 1l3.500 3.500L8 1" fill="none" stroke="#777" strokeWidth="1.500" /></svg>
        </FormulaInput>
      </FormulaBar>

      <SheetArea>
        <Sheet>
          <FrozenPane>
            <SheetHead $pl={37}>
              <Year><Squeezed $x={1.09} $origin="left">2020</Squeezed></Year>
              <HeadLine $mt={7}>220 (New York)</HeadLine>
              <HeadLine>D10 (Sales &amp; Services)</HeadLine>
            </SheetHead>
            <FrozenSection title="Headcount Statistics" marker="#0f6fc6" rows={HEADCOUNT} topGap={22} />
            <Gap $h={18} />
            <FrozenSection title="Salary, Bonus and Benefits" marker="#d9575f" rows={SALARY} topGap={21} />
          </FrozenPane>
          <ScrollPane>
            <SheetHead $pl={4}>
              <Title><Squeezed $x={0.825} $origin="left">Headcount and Payroll Summary</Squeezed></Title>
              <HeadLine $mt={7} $pl={7}>Budget</HeadLine>
              <HeadLine $pl={7}>Local</HeadLine>
            </SheetHead>
            <DataSection rows={HEADCOUNT} topGap={22} />
            <Gap $h={18} />
            <DataSection rows={SALARY} topGap={21} />
          </ScrollPane>
        </Sheet>
        <VScroll>
          <ScrollBtn><Triangle dir="up" /></ScrollBtn>
          <VThumb />
          <VTrack />
          <ScrollBtn $h={13}><Triangle /></ScrollBtn>
        </VScroll>
      </SheetArea>

      <SheetTabs>
        <TabNav>
          <Triangle dir="left" color="#bdbdbd" size={9} />
          <Triangle dir="right" color="#bdbdbd" size={9} />
        </TabNav>
        <NavSep />
        <InputTab>Input</InputTab>
        <SummaryTab>Summary</SummaryTab>
        <AddSheet><Plus size={11} strokeWidth={1.5} color="#666" /></AddSheet>
        <TabDots><i /><i /><i /></TabDots>
        <HScroll>
          <ScrollBtn $w={14}><Triangle dir="left" color="#555" /></ScrollBtn>
          <HThumb />
          <HTrack />
          <ScrollBtn><Triangle dir="right" color="#555" /></ScrollBtn>
        </HScroll>
      </SheetTabs>

      <StatusBar>
        <Ready>Ready</Ready>
        <svg width="13" height="13" viewBox="0 0 13 13">
          <circle cx="3" cy="2.500" r="2.500" fill="#666" />
          <path d="M7 1h6v2H7zM1 6h12v7H1z" fill="#666" />
          <path d="M3 8h1M6 8h1M9 8h1M3 10.500h1M6 10.500h1M9 10.500h1" stroke="#fff" />
        </svg>
        <StatusRight>
          <ViewButton $active>
            <svg width="14" height="12" viewBox="0 0 14 12"><path d="M.5.5h13v11H.5zM5 .5v11M9.500 .5v11M.5 4h13M.5 8h13" fill="none" stroke="#666" /></svg>
          </ViewButton>
          <ViewButton>
            <svg width="14" height="13" viewBox="0 0 14 13"><path d="M.5.5h13v12H.5zM4 3.500h6v6H4zM5 5.500h4M5 7.500h4" fill="none" stroke="#666" /></svg>
          </ViewButton>
          <ViewButton>
            <svg width="14" height="12" viewBox="0 0 14 12"><path d="M.5.5h13v11H.5zM.5 7h7V.5" fill="none" stroke="#666" /></svg>
          </ViewButton>
          <ViewButton $w={14}><Minus size={10} strokeWidth={2.5} color="#666" /></ViewButton>
          <ZoomSlider />
          <ViewButton $w={16}><Plus size={10} strokeWidth={2.5} color="#666" /></ViewButton>
          <ZoomLabel>100%</ZoomLabel>
        </StatusRight>
      </StatusBar>
    </Page>
  );
}
